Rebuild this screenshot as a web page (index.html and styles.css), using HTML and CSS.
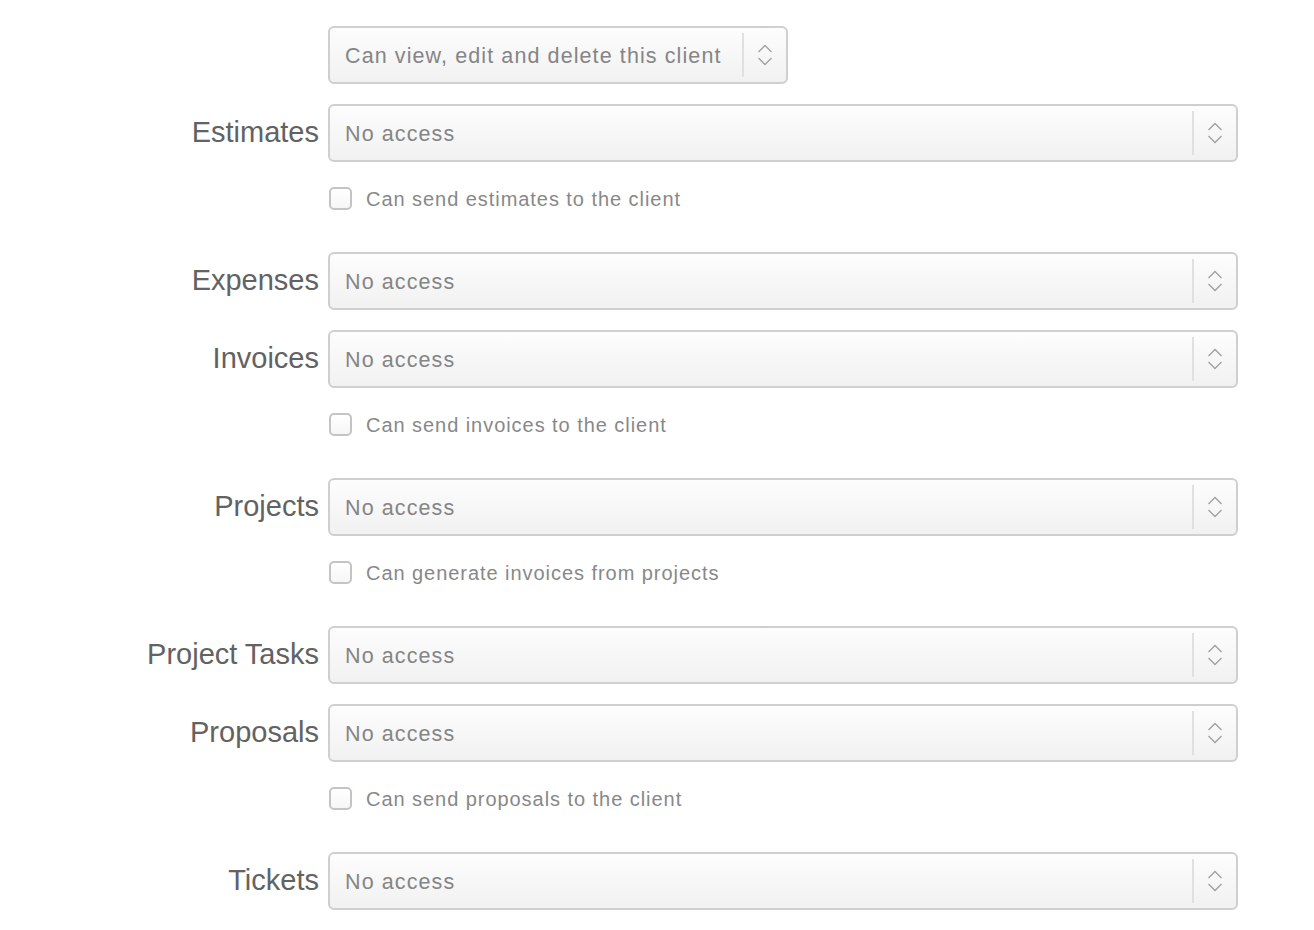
FILE: index.html
```html
<!DOCTYPE html>
<html>
<head>
<meta charset="utf-8">
<link rel="stylesheet" href="styles.css">
</head>
<body>
<div class="form">
  <div class="row">
    <div class="label"></div>
    <div class="select select-short"><span class="value">Can view, edit and delete this client</span><span class="arrow"><svg width="16" height="26" viewBox="0 0 16 26"><path d="M1.5 10 L8 3.5 L14.5 10 M1.5 16 L8 22.5 L14.5 16" fill="none" stroke="#a0a0a0" stroke-width="1.3"/></svg></span></div>
  </div>
  <div class="row">
    <div class="label">Estimates</div>
    <div class="select"><span class="value">No access</span><span class="arrow"><svg width="16" height="26" viewBox="0 0 16 26"><path d="M1.5 10 L8 3.5 L14.5 10 M1.5 16 L8 22.5 L14.5 16" fill="none" stroke="#a0a0a0" stroke-width="1.3"/></svg></span></div>
  </div>
  <div class="check-row"><span class="box"></span><span class="check-text">Can send estimates to the client</span></div>
  <div class="row">
    <div class="label">Expenses</div>
    <div class="select"><span class="value">No access</span><span class="arrow"><svg width="16" height="26" viewBox="0 0 16 26"><path d="M1.5 10 L8 3.5 L14.5 10 M1.5 16 L8 22.5 L14.5 16" fill="none" stroke="#a0a0a0" stroke-width="1.3"/></svg></span></div>
  </div>
  <div class="row">
    <div class="label">Invoices</div>
    <div class="select"><span class="value">No access</span><span class="arrow"><svg width="16" height="26" viewBox="0 0 16 26"><path d="M1.5 10 L8 3.5 L14.5 10 M1.5 16 L8 22.5 L14.5 16" fill="none" stroke="#a0a0a0" stroke-width="1.3"/></svg></span></div>
  </div>
  <div class="check-row"><span class="box"></span><span class="check-text">Can send invoices to the client</span></div>
  <div class="row">
    <div class="label">Projects</div>
    <div class="select"><span class="value">No access</span><span class="arrow"><svg width="16" height="26" viewBox="0 0 16 26"><path d="M1.5 10 L8 3.5 L14.5 10 M1.5 16 L8 22.5 L14.5 16" fill="none" stroke="#a0a0a0" stroke-width="1.3"/></svg></span></div>
  </div>
  <div class="check-row"><span class="box"></span><span class="check-text">Can generate invoices from projects</span></div>
  <div class="row">
    <div class="label">Project Tasks</div>
    <div class="select"><span class="value">No access</span><span class="arrow"><svg width="16" height="26" viewBox="0 0 16 26"><path d="M1.5 10 L8 3.5 L14.5 10 M1.5 16 L8 22.5 L14.5 16" fill="none" stroke="#a0a0a0" stroke-width="1.3"/></svg></span></div>
  </div>
  <div class="row">
    <div class="label">Proposals</div>
    <div class="select"><span class="value">No access</span><span class="arrow"><svg width="16" height="26" viewBox="0 0 16 26"><path d="M1.5 10 L8 3.5 L14.5 10 M1.5 16 L8 22.5 L14.5 16" fill="none" stroke="#a0a0a0" stroke-width="1.3"/></svg></span></div>
  </div>
  <div class="check-row"><span class="box"></span><span class="check-text">Can send proposals to the client</span></div>
  <div class="row">
    <div class="label">Tickets</div>
    <div class="select"><span class="value">No access</span><span class="arrow"><svg width="16" height="26" viewBox="0 0 16 26"><path d="M1.5 10 L8 3.5 L14.5 10 M1.5 16 L8 22.5 L14.5 16" fill="none" stroke="#a0a0a0" stroke-width="1.3"/></svg></span></div>
  </div>
</div>
</body>
</html>
```
FILE: styles.css
```css
html, body {
  margin: 0;
  padding: 0;
  background: #fff;
}
body {
  font-family: "Liberation Sans", Arial, sans-serif;
}
.form {
  padding-top: 26px;
  display: flex;
  flex-direction: column;
}
.row {
  display: flex;
  align-items: center;
  height: 58px;
  margin-bottom: 20px;
}
.label {
  width: 328px;
  box-sizing: border-box;
  padding-right: 9px;
  text-align: right;
  font-size: 29px;
  color: #626262;
  letter-spacing: 0;
  position: relative;
  top: -1px;
}
.select {
  width: 910px;
  height: 58px;
  box-sizing: border-box;
  border: 2px solid #cfcfcf;
  border-radius: 6px;
  background: linear-gradient(#fdfdfd, #f1f1f1);
  display: flex;
  align-items: center;
}
.select-short {
  width: 460px;
}
.value {
  flex: 1;
  padding-left: 15px;
  font-size: 21.5px;
  color: #858585;
  letter-spacing: 1.1px;
  position: relative;
  top: 1px;
}
.arrow {
  width: 42px;
  height: 44px;
  border-left: 2px solid #e0e0e0;
  display: flex;
  align-items: center;
  justify-content: center;
  margin-left: 1px;
}
.check-row {
  display: flex;
  align-items: center;
  height: 32px;
  margin-top: 0;
  margin-bottom: 38px;
  padding-left: 329px;
}
.box {
  width: 19px;
  height: 19px;
  border: 2px solid #c4c4c4;
  border-radius: 5px;
  background: linear-gradient(#fff, #f6f6f6);
}
.check-text {
  margin-left: 14px;
  font-size: 20px;
  color: #888;
  letter-spacing: 0.95px;
  position: relative;
  top: 1px;
}
```
